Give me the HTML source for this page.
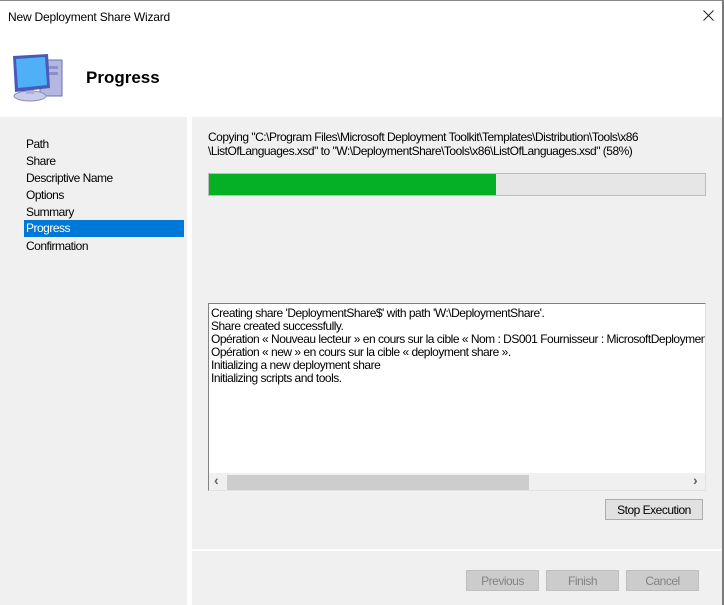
<!DOCTYPE html>
<html><head><style>
*{margin:0;padding:0;box-sizing:border-box}
body{width:724px;height:605px;background:#fff;font-family:"Liberation Sans",sans-serif;font-size:12px;color:#000;position:relative;overflow:hidden;letter-spacing:-0.5px}
.a{position:absolute}
.btn{position:absolute;background:#e1e1e1;border:1px solid #adadad;text-align:center;line-height:20px;font-size:12px}
.dis{background:#ccc;border-color:#bfbfbf;color:#838383}
</style></head><body>
<div class="a" style="left:0;top:0;width:724px;height:1px;background:#8a8a8a"></div>
<div class="a" style="left:722px;top:0;width:2px;height:605px;background:#7a7a7a"></div>
<div class="a" style="left:8px;top:10px;font-size:12px;letter-spacing:-0.2px">New Deployment Share Wizard</div>
<svg class="a" style="left:703px;top:10px" width="11" height="11" viewBox="0 0 11 11"><path d="M0.5 0.5L10.5 10.5M10.5 0.5L0.5 10.5" stroke="#222" stroke-width="1"/></svg>
<svg class="a" style="left:10px;top:52px" width="56" height="52" viewBox="0 0 56 52">
<rect x="30" y="8" width="22" height="36" fill="#b4b8e0" stroke="#6a6fb0"/>
<rect x="36" y="14" width="12" height="3" fill="#8a90c8"/>
<rect x="36" y="20" width="12" height="3" fill="#8a90c8"/>
<ellipse cx="20" cy="44" rx="16" ry="5" fill="#c8cce8" stroke="#8a8fc0"/>
<rect x="16" y="34" width="8" height="8" fill="#aab0dc"/>
<path d="M3 4 L38 2 L40 36 L5 40 Z" fill="#4a5ab8"/>
<path d="M6 7 L35 5 L37 33 L8 36 Z" fill="#4fb0f8"/>
</svg>
<div class="a" style="left:86px;top:68px;font-size:17px;font-weight:bold;letter-spacing:0">Progress</div>
<div class="a" style="left:0;top:117px;width:187px;height:488px;background:#f0f0f0"></div>
<div class="a" style="left:192px;top:117px;width:530px;height:432px;background:#f0f0f0"></div>
<div class="a" style="left:192px;top:551px;width:530px;height:54px;background:#f0f0f0"></div>
<div class="a" style="left:26px;top:136px;line-height:17px">Path<br>Share<br>Descriptive Name<br>Options<br>Summary</div>
<div class="a" style="left:24px;top:220px;width:160px;height:17px;background:#0078d7;color:#fff;padding-left:2px;line-height:17px">Progress</div>
<div class="a" style="left:26px;top:239px">Confirmation</div>
<div class="a" style="left:208px;top:130px;line-height:14px">Copying "C:\Program Files\Microsoft Deployment Toolkit\Templates\Distribution\Tools\x86<br>\ListOfLanguages.xsd" to "W:\DeploymentShare\Tools\x86\ListOfLanguages.xsd" (58%)</div>
<div class="a" style="left:208px;top:173px;width:498px;height:23px;background:#e6e6e6;border:1px solid #bcbcbc"></div>
<div class="a" style="left:209px;top:174px;width:287px;height:21px;background:#06b025"></div>
<div class="a" style="left:208px;top:303px;width:498px;height:188px;background:#fff;border:1px solid #828282;border-right-color:#e3e3e3;border-bottom-color:#e3e3e3;overflow:hidden">
<div style="padding:3px 2px;line-height:13px;white-space:nowrap">Creating share 'DeploymentShare$' with path 'W:\DeploymentShare'.<br>Share created successfully.<br>Opération « Nouveau lecteur » en cours sur la cible « Nom : DS001 Fournisseur : MicrosoftDeploymentToolkit<br>Opération « new » en cours sur la cible « deployment share ».<br>Initializing a new deployment share<br>Initializing scripts and tools.</div>
<div class="a" style="left:0;top:169px;width:496px;height:17px;background:#f0f0f0"></div>
<div class="a" style="left:18px;top:171px;width:302px;height:15px;background:#cdcdcd"></div>
<div class="a" style="left:5px;top:168px;font-size:14px;font-weight:bold;color:#606060">‹</div>
<div class="a" style="left:484px;top:168px;font-size:14px;font-weight:bold;color:#606060">›</div>
</div>
<div class="btn" style="left:605px;top:499px;width:98px;height:21px">Stop Execution</div>
<div class="btn dis" style="left:466px;top:570px;width:73px;height:21px">Previous</div>
<div class="btn dis" style="left:546px;top:570px;width:73px;height:21px">Finish</div>
<div class="btn dis" style="left:626px;top:570px;width:73px;height:21px">Cancel</div>
</body></html>
